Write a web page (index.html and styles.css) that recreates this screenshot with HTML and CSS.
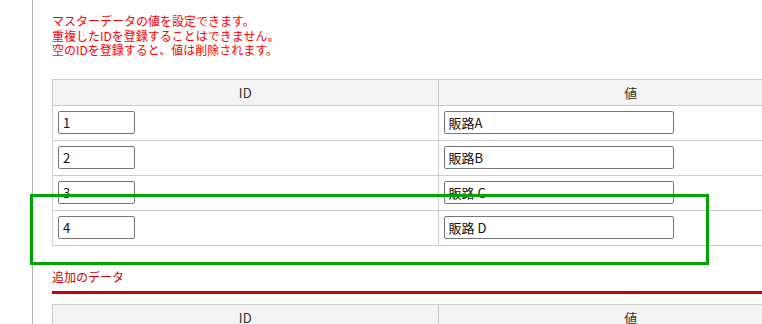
FILE: index.html
```html
<!DOCTYPE html>
<html lang="ja">
<head>
<meta charset="UTF-8" />
<title>マスターデータ設定</title>
<link rel="stylesheet" href="styles.css">
</head>
<body>
<div class="main">
  <p class="notice">
    マスターデータの値を設定できます。<br>
    重複したIDを登録することはできません。<br>
    空のIDを登録すると、値は削除されます。
  </p>

  <table class="master">
    <thead>
      <tr><th>ID</th><th>値</th></tr>
    </thead>
    <tbody>
      <tr><td><input class="id-input" type="text" value="1"></td><td><input class="val-input" type="text" value="販路A"></td></tr>
      <tr><td><input class="id-input" type="text" value="2"></td><td><input class="val-input" type="text" value="販路B"></td></tr>
      <tr><td><input class="id-input" type="text" value="3"></td><td><input class="val-input" type="text" value="販路 C"></td></tr>
      <tr><td><input class="id-input" type="text" value="4"></td><td><input class="val-input" type="text" value="販路 D"></td></tr>
    </tbody>
  </table>

  <h2 class="section-title">追加のデータ</h2>

  <table class="master add">
    <thead>
      <tr><th>ID</th><th>値</th></tr>
    </thead>
  </table>
</div>

<div class="highlight"></div>
</body>
</html>
```

FILE: styles.css
```css
* {
  box-sizing: border-box;
}
html, body {
  overflow: hidden;
}
body {
  margin: 0;
  background: #fff;
  color: #222;
  font-family: "Noto Sans CJK JP", "Noto Sans", sans-serif;
  font-size: 12px;
}
.main {
  margin-left: 32px;
  border-left: 1px solid #b4b4b4;
  padding: 14px 0 0 19px;
  min-height: 100vh;
}
.notice {
  margin: 0;
  color: #f00;
  font-size: 12px;
  line-height: 14.5px;
}
.master {
  margin-top: 21px;
  width: 772px;
  border-collapse: collapse;
  table-layout: fixed;
  border: 1px solid #ccc;
}
.master th {
  height: 26px;
  background: #f2f3f2;
  border: 1px solid #ccc;
  font-weight: normal;
  font-size: 13px;
  color: #333;
  padding: 0;
}
.master td {
  border: 1px solid #ccc;
  padding: 5px 5px 6px;
  height: 35px;
}
.master input {
  display: block;
  height: 23px;
  border: 1px solid #767676;
  border-radius: 2px;
  padding: 0 4px;
  font-family: inherit;
  font-size: 13px;
  color: #111;
}
.id-input {
  width: 77px;
}
.val-input {
  width: 230px;
}
.section-title {
  margin: 22px 0 0;
  padding-bottom: 5px;
  border-bottom: 3px solid #c00;
  color: #c00;
  font-size: 12px;
  font-weight: normal;
  line-height: 18px;
}
.master.add {
  margin-top: 10px;
}
.highlight {
  position: absolute;
  left: 30px;
  top: 194px;
  width: 679px;
  height: 71px;
  border: 3px solid #00a300;
  pointer-events: none;
}
```
